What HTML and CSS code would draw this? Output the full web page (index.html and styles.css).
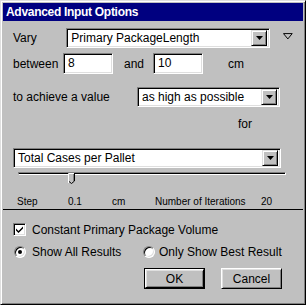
FILE: index.html
```html
<!DOCTYPE html>
<html>

<head>
    <title>Advanced Input Options</title>
    <link rel="stylesheet" href="styles.css">
</head>

<body>
    <div class="dialog">
        <div class="titlebar">Advanced Input Options</div>
        <div class="content">
            <div class="row row-vary">
                <span class="lbl lbl-vary">Vary</span>
                <div class="select sel-vary">
                    <span class="sel-text">Primary PackageLength</span>
                    <span class="sel-btn"><svg width="7" height="4" viewBox="0 0 7 4"><path d="M0 0H7L3.5 4Z" fill="#000"/></svg></span>
                </div>
                <svg class="menu-tri" width="10" height="7" viewBox="0 0 10 7"><path d="M0.5 0.5H9.5L5 6Z" fill="none" stroke="#000" stroke-width="1"/></svg>
            </div>
            <div class="row row-between">
                <span class="lbl lbl-between">between</span>
                <div class="field">8</div>
                <span class="lbl lbl-and">and</span>
                <div class="field">10</div>
                <span class="lbl lbl-cm">cm</span>
            </div>
            <div class="row row-achieve">
                <span class="lbl lbl-achieve">to achieve a value</span>
                <div class="select sel-achieve">
                    <span class="sel-text">as high as possible</span>
                    <span class="sel-btn"><svg width="7" height="4" viewBox="0 0 7 4"><path d="M0 0H7L3.5 4Z" fill="#000"/></svg></span>
                </div>
            </div>
            <div class="row row-for">
                <span class="lbl">for</span>
            </div>
            <div class="row row-total">
                <div class="select sel-total">
                    <span class="sel-text">Total Cases per Pallet</span>
                    <span class="sel-btn"><svg width="7" height="4" viewBox="0 0 7 4"><path d="M0 0H7L3.5 4Z" fill="#000"/></svg></span>
                </div>
            </div>
            <div class="slider">
                <div class="track"></div>
                <svg class="thumb" width="7" height="11" viewBox="0 0 7 11">
                    <path d="M0.5 10V0.5H6" fill="#c0c0c0" stroke="#fff"/>
                    <path d="M1 8.5L3.5 10.5L6.5 8V0" fill="none" stroke="#000"/>
                    <path d="M5.5 1V8" stroke="#808080"/>
                </svg>
            </div>
            <div class="row row-step">
                <span class="st st-step">Step</span>
                <span class="st st-val">0.1</span>
                <span class="st st-unit">cm</span>
                <span class="st st-iter">Number of Iterations</span>
                <span class="st">20</span>
            </div>
            <div class="separator"></div>
            <div class="row row-check">
                <span class="checkbox"><svg width="7" height="7" viewBox="0 0 7 7"><path d="M0 2.5L2.5 5L7 0.5V2.5L2.5 7L0 4.5Z" fill="#000"/></svg></span>
                <span class="lbl lbl-opt">Constant Primary Package Volume</span>
            </div>
            <div class="row row-radio">
                <div class="radio-group radio-all">
                    <span class="radio checked"></span>
                    <span class="lbl lbl-opt">Show All Results</span>
                </div>
                <div class="radio-group">
                    <span class="radio"></span>
                    <span class="lbl lbl-opt2">Only Show Best Result</span>
                </div>
            </div>
            <div class="row row-buttons">
                <div class="btn btn-default"><span class="btn-face">OK</span></div>
                <div class="btn btn-cancel"><span class="btn-face">Cancel</span></div>
            </div>
        </div>
    </div>
</body>

</html>
```

FILE: styles.css
```css
body {
    margin: 0;
    font-family: "Liberation Sans", Arial, sans-serif;
    font-size: 12px;
    color: #000;
    background: #c0c0c0;
}

.dialog {
    width: 306px;
    height: 305px;
    box-sizing: border-box;
    background: #c0c0c0;
    border: 1px solid;
    border-color: #dfdfdf #000 #000 #dfdfdf;
    box-shadow: inset 1px 1px #fff, inset -1px -1px #808080;
    padding: 2px;
}

.titlebar {
    height: 18px;
    line-height: 19px;
    background: #000080;
    color: #fff;
    font-weight: bold;
    font-size: 12px;
    letter-spacing: -0.3px;
    padding-left: 3px;
}

.content {
    padding: 0 10px;
}

.row {
    display: flex;
    align-items: center;
}

.lbl {
    white-space: nowrap;
}

/* rows */
.row-vary {
    margin-top: 7px;
    height: 20px;
}

.lbl-vary {
    width: 55px;
}

.menu-tri {
    align-self: flex-start;
    margin-top: 5px;
    margin-left: 13px;
}

.row-between {
    margin-top: 5px;
    height: 21px;
}

.lbl-between {
    width: 50px;
}

.lbl-and {
    margin-left: 11px;
    width: 29px;
}

.lbl-cm {
    margin-left: 25px;
}

.row-achieve {
    margin-top: 12px;
    height: 21px;
}

.lbl-achieve {
    width: 124px;
}

.row-for {
    margin-top: 10px;
    height: 14px;
    padding-left: 225px;
}

.row-total {
    margin-top: 17px;
    height: 20px;
}

/* sunken controls */
.select,
.field,
.checkbox {
    box-sizing: border-box;
    background: #fff;
    border: 1px solid;
    border-color: #808080 #fff #fff #808080;
    box-shadow: inset 1px 1px #000, inset -1px -1px #dfdfdf;
}

.select {
    height: 20px;
    display: flex;
    align-items: center;
    padding: 2px;
}

.sel-text {
    flex: 1;
    padding-left: 2px;
    white-space: nowrap;
}

.sel-btn {
    width: 16px;
    height: 16px;
    box-sizing: border-box;
    background: #c0c0c0;
    border: 1px solid;
    border-color: #dfdfdf #000 #000 #dfdfdf;
    box-shadow: inset 1px 1px #fff, inset -1px -1px #808080;
    display: flex;
    align-items: center;
    justify-content: center;
}

.sel-vary {
    width: 210px;
}

.sel-achieve {
    width: 143px;
}

.sel-total {
    width: 268px;
}

.field {
    width: 50px;
    height: 21px;
    line-height: 19px;
    padding-left: 4px;
}

/* slider */
.slider {
    position: relative;
    margin-top: 4px;
    height: 12px;
}

.track {
    margin: 4px 0 0 5px;
    width: 266px;
    height: 1px;
    background: #000;
    border: 1px solid;
    border-color: #808080 #fff #fff #808080;
}

.thumb {
    position: absolute;
    left: 55px;
    top: 1px;
}

.row-step {
    margin-top: 10px;
    height: 14px;
    font-size: 10px;
    padding-left: 4px;
}

.st-step {
    width: 51px;
}

.st-val {
    width: 44px;
}

.st-unit {
    width: 43px;
}

.st-iter {
    width: 106px;
}

.separator {
    margin: 1px -10px 0;
    height: 1px;
    background: #000;
}

.row-check {
    margin-top: 13px;
    height: 13px;
}

.checkbox {
    width: 13px;
    height: 13px;
    display: flex;
    align-items: center;
    justify-content: center;
}

.lbl-opt {
    margin-left: 6px;
}

.row-radio {
    margin-top: 10px;
    height: 12px;
}

.radio-group {
    display: flex;
    align-items: center;
}

.radio-all {
    width: 130px;
}

.radio {
    width: 12px;
    height: 12px;
    box-sizing: border-box;
    border-radius: 50%;
    background: #fff;
    border: 1px solid;
    border-color: #808080 #fff #fff #808080;
    box-shadow: inset 1px 1px #000, inset -1px -1px #dfdfdf;
    display: flex;
    align-items: center;
    justify-content: center;
}

.radio-all .radio {
    margin-left: 1px;
}

.radio.checked::after {
    content: "";
    width: 4px;
    height: 4px;
    border-radius: 50%;
    background: #000;
}

.lbl-opt2 {
    margin-left: 4px;
}

/* buttons */
.row-buttons {
    margin-top: 10px;
    height: 21px;
}

.btn {
    width: 61px;
    height: 21px;
    box-sizing: border-box;
    display: flex;
}

.btn-face {
    flex: 1;
    box-sizing: border-box;
    background: #c0c0c0;
    border: 1px solid;
    border-color: #fff #000 #000 #fff;
    box-shadow: inset 1px 1px #dfdfdf, inset -1px -1px #808080;
    display: flex;
    align-items: center;
    justify-content: center;
}

.btn-default {
    margin-left: 131px;
    border: 1px solid #000;
}

.btn-cancel {
    margin-left: 16px;
}
```
